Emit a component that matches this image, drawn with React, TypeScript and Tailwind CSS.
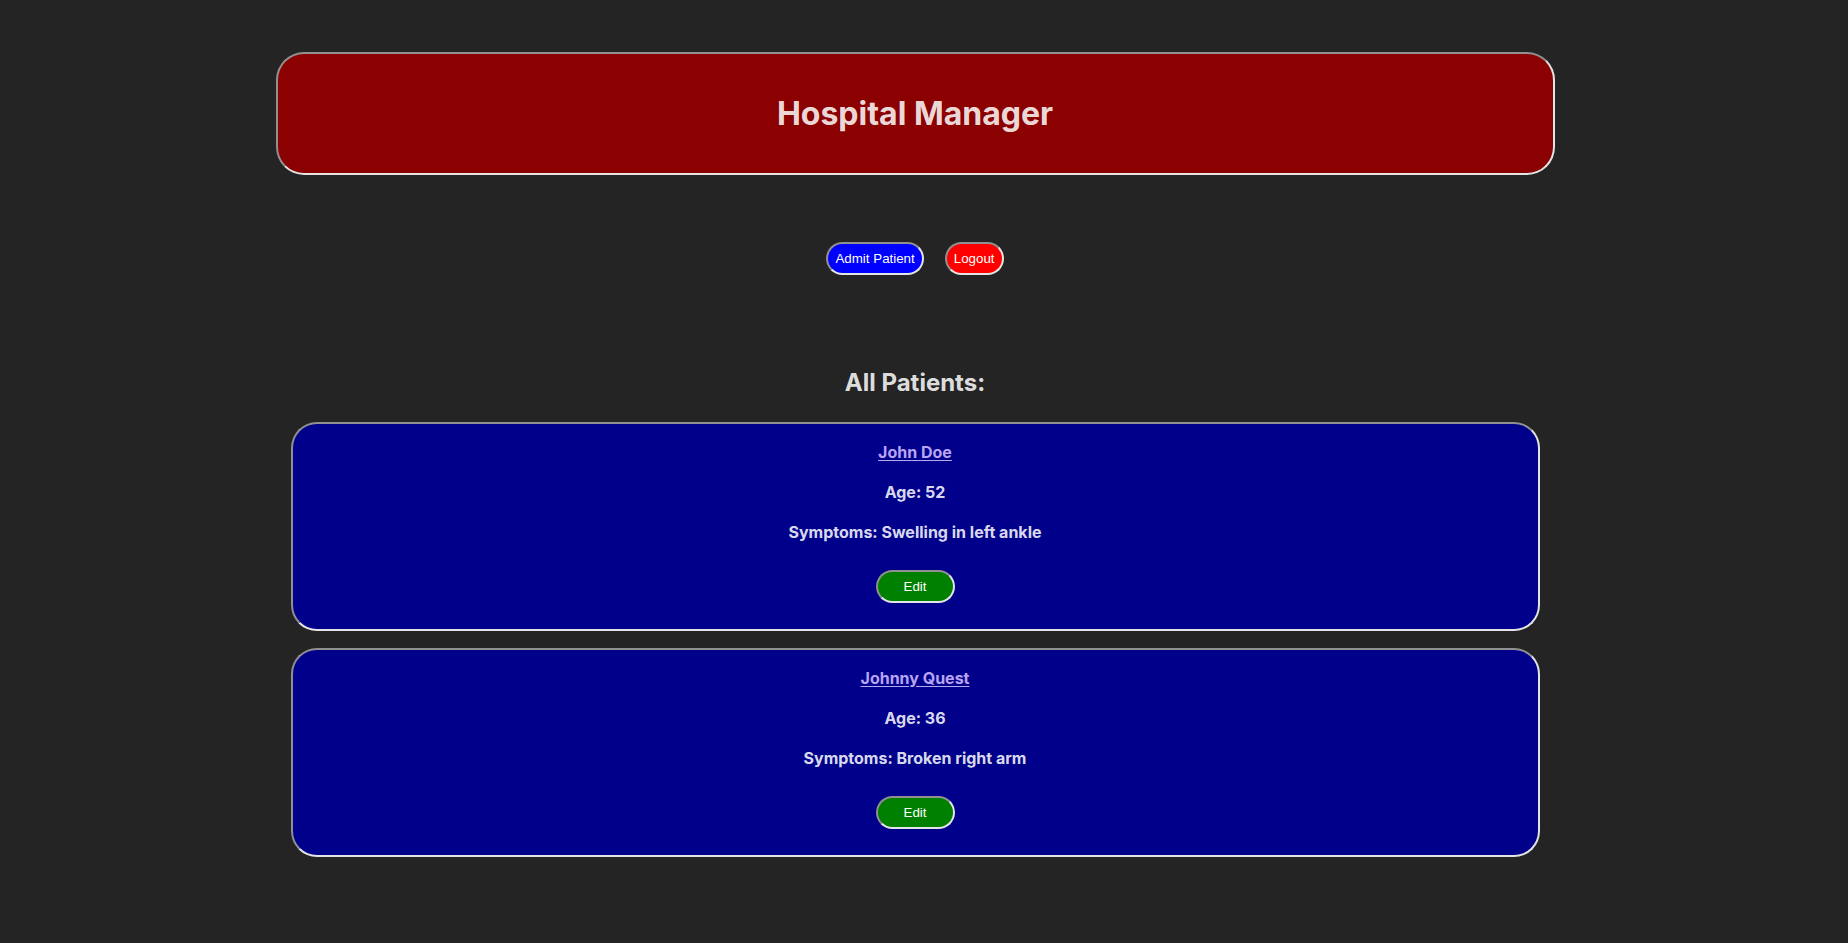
import { type ReactNode } from 'react';

type Patient = {
  id: number;
  name: string;
  age: number;
  symptoms: string;
};

const patients: Patient[] = [
  { id: 1, name: 'John Doe', age: 52, symptoms: 'Swelling in left ankle' },
  { id: 2, name: 'Johnny Quest', age: 36, symptoms: 'Broken right arm' },
];

const Pill = ({ className, children }: { className: string; children: ReactNode }) => (
  <button
    type="button"
    className={`rounded-full border-2 border-[#e4e4e4] [border-style:inset] px-[7px] py-[7px] text-[13.333px] leading-[15px] text-white font-['Liberation_Sans',Arial,sans-serif] ${className}`}
  >
    {children}
  </button>
);

const PatientCard = ({ patient }: { patient: Patient }) => (
  <div className="flex w-[1249px] flex-col items-center rounded-[26px] border-2 border-[#e4e4e4] [border-style:inset] bg-[#00008b] pt-[16px] pb-[26px] text-center">
    <p className="text-base leading-6 font-bold">
      <a href="#" className="text-[#b9a4f4] underline underline-offset-2">
        {patient.name}
      </a>
    </p>
    <p className="mt-4 text-base leading-6 font-bold">Age: {patient.age}</p>
    <p className="mt-4 text-base leading-6 font-bold">Symptoms: {patient.symptoms}</p>
    <Pill className="mt-[26px] w-[79px] bg-[#008000]">Edit</Pill>
  </div>
);

export default function App() {
  return (
    <div className="min-h-screen bg-[#242424] pr-[18px] text-[rgba(255,255,255,0.87)] font-['Inter','Noto_Sans',sans-serif]">
      <div className="flex flex-col items-center pt-[52px] pb-10">
        <header className="flex h-[123px] w-[1279px] items-center justify-center rounded-[28px] border-2 border-[#e4e4e4] [border-style:inset] bg-[#8b0000]">
          <h1 className="text-[32px] leading-[48px] font-bold">Hospital Manager</h1>
        </header>

        <div className="mt-[67px] flex gap-[21px]">
          <Pill className="bg-[#0000ff]">Admit Patient</Pill>
          <Pill className="bg-[#ff0000]">Logout</Pill>
        </div>

        <h2 className="mt-[90px] text-2xl leading-9 font-bold">All Patients:</h2>

        <div className="mt-[21px] flex flex-col gap-[17px]">
          {patients.map((p) => (
            <PatientCard key={p.id} patient={p} />
          ))}
        </div>
      </div>
    </div>
  );
}
